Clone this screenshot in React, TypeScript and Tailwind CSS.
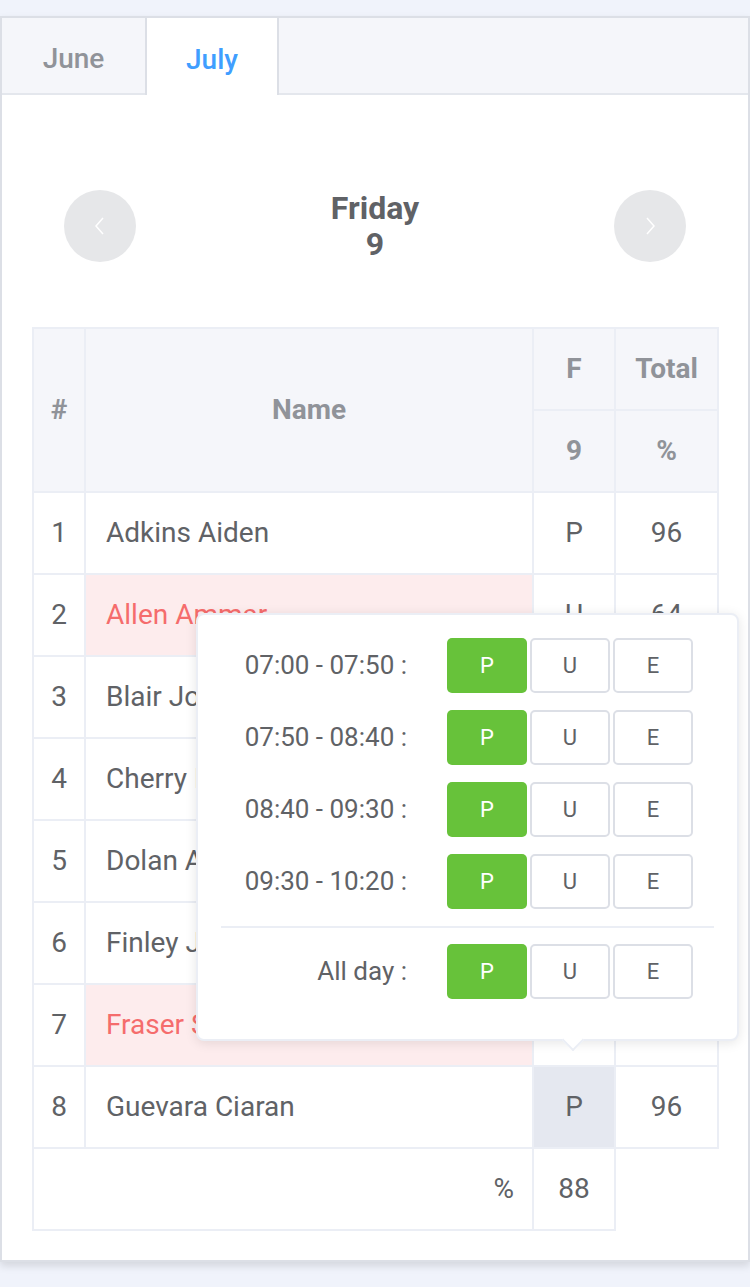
import React from "react";

const rows = [
  { n: 1, name: "Adkins Aiden", f: "P", t: "96", red: false },
  { n: 2, name: "Allen Ammar", f: "U", t: "64", red: true },
  { n: 3, name: "Blair Jonah", f: "P", t: "92", red: false },
  { n: 4, name: "Cherry Lina", f: "P", t: "96", red: false },
  { n: 5, name: "Dolan Amir", f: "P", t: "96", red: false },
  { n: 6, name: "Finley Jude", f: "P", t: "92", red: false },
  { n: 7, name: "Fraser Sami", f: "U", t: "68", red: true },
  { n: 8, name: "Guevara Ciaran", f: "P", t: "96", red: false },
];

const slots = ["07:00 - 07:50 :", "07:50 - 08:40 :", "08:40 - 09:30 :", "09:30 - 10:20 :"];

function Choice() {
  return (
    <div className="flex gap-[3px]">
      <div className="w-[80px] h-[55px] rounded-[5px] bg-[#67c23a] text-white flex items-center justify-center text-[22px]">P</div>
      <div className="w-[80px] h-[55px] rounded-[5px] border-2 border-[#dcdfe6] bg-white text-[#606266] flex items-center justify-center text-[22px]">U</div>
      <div className="w-[80px] h-[55px] rounded-[5px] border-2 border-[#dcdfe6] bg-white text-[#606266] flex items-center justify-center text-[22px]">E</div>
    </div>
  );
}

export default function App() {
  return (
    <div className="min-h-[1287px] bg-[#f0f3fb] pt-[16px]" style={{ fontFamily: "Roboto, 'Noto Sans', sans-serif" }}>
      <div className="bg-white border-2 border-[#dcdfe6] shadow-[0_4px_8px_rgba(0,0,0,0.12)] pb-[29px]">
        <div className="flex h-[77px] bg-[#f5f6fa] border-b-2 border-[#e4e7ed]">
          <div className="w-[143px] pt-[6px] flex items-center justify-center text-[28px] font-medium text-[#909399]">June</div>
          <div className="w-[134px] pt-[6px] -mb-[2px] bg-white border-x-2 border-[#dcdfe6] flex items-center justify-center text-[28px] font-medium text-[#409eff]">July</div>
        </div>
        <div className="px-[30px]">
          <div className="flex items-center justify-between px-[32px] mt-[95px] h-[72px]">
            <div className="w-[72px] h-[72px] rounded-full bg-[#e6e7e9] flex items-center justify-center">
              <svg width="12" height="20" viewBox="0 0 12 20"><polyline points="9,2 2,10 9,18" fill="none" stroke="white" strokeWidth="1.5" /></svg>
            </div>
            <div className="text-center text-[32px] font-bold text-[#606266] leading-[36px]">
              <div>Friday</div>
              <div>9</div>
            </div>
            <div className="w-[72px] h-[72px] rounded-full bg-[#e6e7e9] flex items-center justify-center">
              <svg width="12" height="20" viewBox="0 0 12 20"><polyline points="3,2 10,10 3,18" fill="none" stroke="white" strokeWidth="1.5" /></svg>
            </div>
          </div>
          <div className="relative mt-[65px]">
            <table className="table-fixed border-collapse w-[685px] text-[28px] text-[#606266]">
              <colgroup>
                <col className="w-[52px]" />
                <col className="w-[448px]" />
                <col className="w-[82px]" />
                <col className="w-[103px]" />
              </colgroup>
              <thead>
                <tr className="h-[82px]">
                  <th rowSpan={2} className="border-2 border-[#ebeef5] bg-[#f5f6fa] text-[#909399] font-bold">#</th>
                  <th rowSpan={2} className="border-2 border-[#ebeef5] bg-[#f5f6fa] text-[#909399] font-bold">Name</th>
                  <th className="border-2 border-[#ebeef5] bg-[#f5f6fa] text-[#909399] font-bold">F</th>
                  <th className="border-2 border-[#ebeef5] bg-[#f5f6fa] text-[#909399] font-bold">Total</th>
                </tr>
                <tr className="h-[82px]">
                  <th className="border-2 border-[#ebeef5] bg-[#f5f6fa] text-[#909399] font-bold">9</th>
                  <th className="border-2 border-[#ebeef5] bg-[#f5f6fa] text-[#909399] font-bold">%</th>
                </tr>
              </thead>
              <tbody>
                {rows.map((r) => (
                  <tr key={r.n} className="h-[82px]">
                    <td className="border-2 border-[#ebeef5] text-center">{r.n}</td>
                    <td className={r.red ? "border-2 border-[#ebeef5] pl-[20px] bg-[#fdeced] text-[#f56c6c] whitespace-nowrap" : "border-2 border-[#ebeef5] pl-[20px] whitespace-nowrap"}>{r.name}</td>
                    <td className={r.n === 8 ? "border-2 border-[#ebeef5] text-center bg-[#e5e8f0]" : "border-2 border-[#ebeef5] text-center"}>{r.f}</td>
                    <td className="border-2 border-[#ebeef5] text-center">{r.t}</td>
                  </tr>
                ))}
                <tr className="h-[82px]">
                  <td colSpan={2} className="border-2 border-[#ebeef5] text-right pr-[18px]">%</td>
                  <td className="border-2 border-[#ebeef5] text-center">88</td>
                </tr>
              </tbody>
            </table>
            <div className="absolute left-[164px] top-[286px] w-[543px] h-[428px] bg-white border-2 border-[#ebeef5] rounded-[8px] shadow-[0_2px_12px_rgba(0,0,0,0.1)] px-[23px] pt-[23px]">
              <div className="flex flex-col gap-[17px]">
                {slots.map((s) => (
                  <div key={s} className="flex items-center">
                    <div className="w-[186px] text-right text-[26px] text-[#606266]">{s}</div>
                    <div className="ml-[40px]"><Choice /></div>
                  </div>
                ))}
              </div>
              <div className="h-[2px] bg-[#ebeef5] mt-[17px] mb-[16px]" />
              <div className="flex items-center">
                <div className="w-[186px] text-right text-[26px] text-[#606266]">All day :</div>
                <div className="ml-[40px]"><Choice /></div>
              </div>
              <div className="absolute left-[367px] -bottom-[9px] w-[16px] h-[16px] bg-white border-r-2 border-b-2 border-[#ebeef5] rotate-45" />
            </div>
          </div>
        </div>
      </div>
    </div>
  );
}
